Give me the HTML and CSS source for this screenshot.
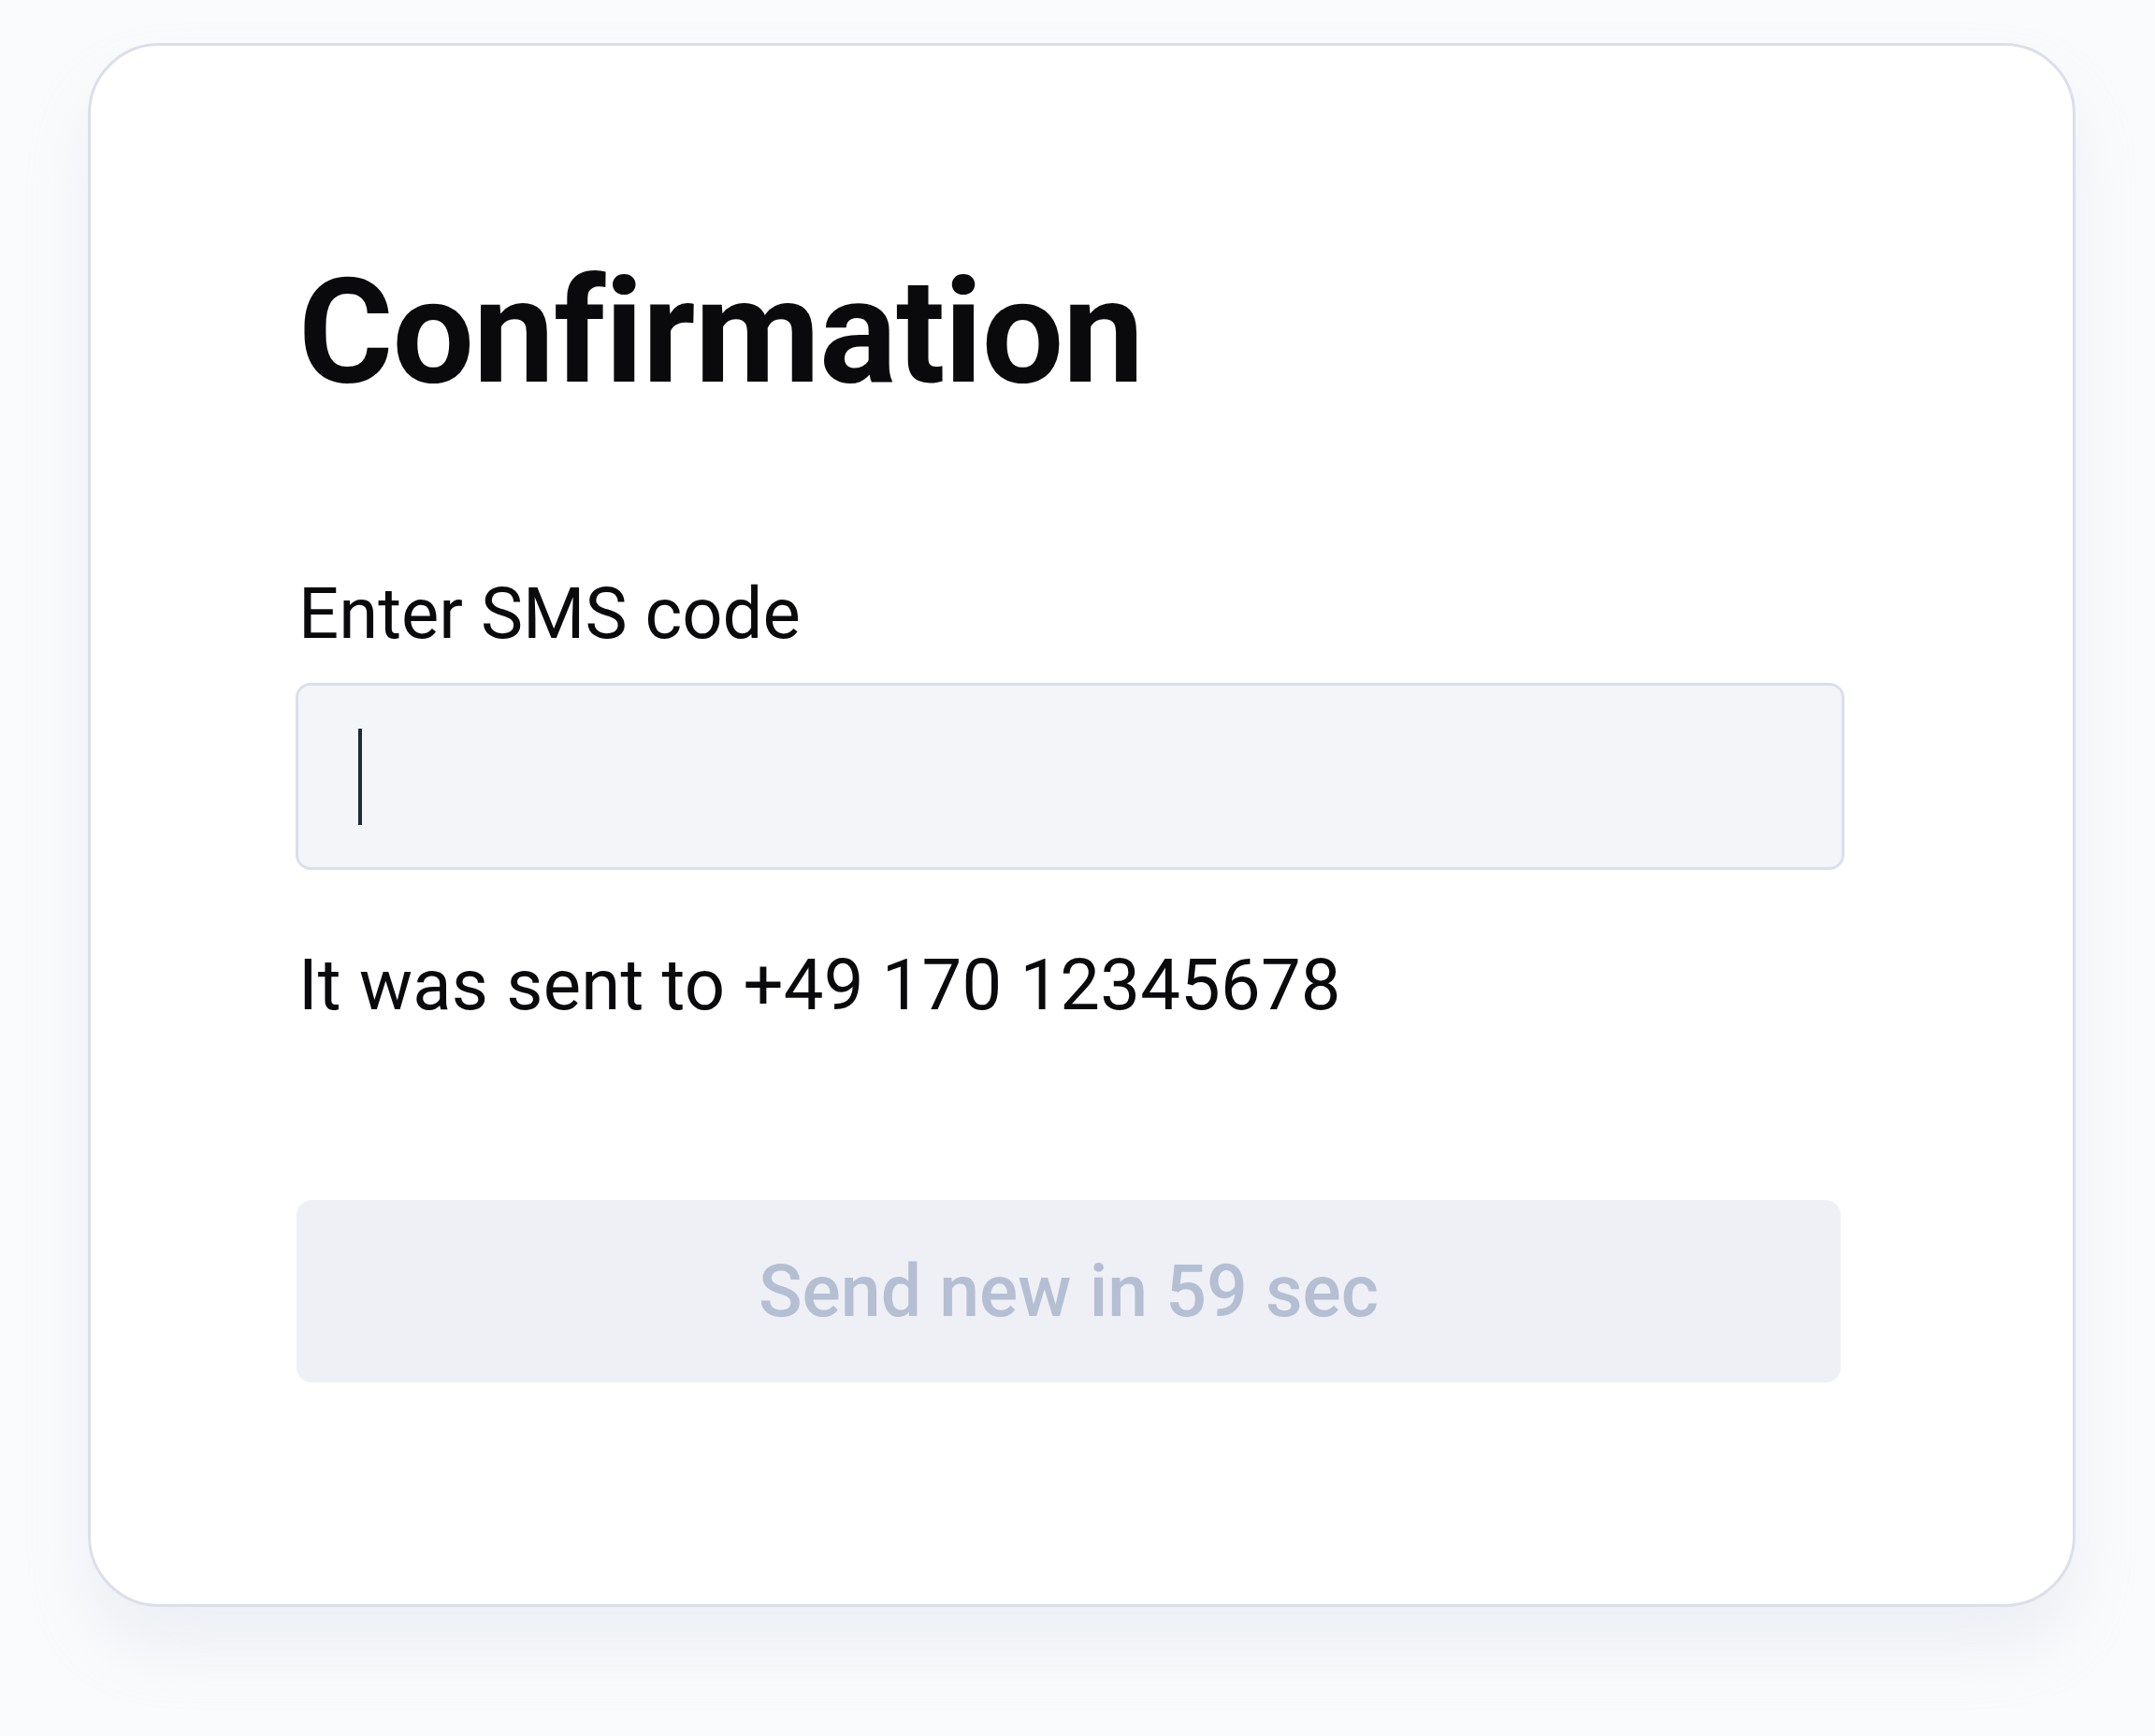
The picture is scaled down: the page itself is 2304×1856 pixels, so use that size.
FILE: index.html
```html
<!DOCTYPE html>
<html lang="en">
<head>
<meta charset="utf-8">
<title>Confirmation</title>
<link rel="stylesheet" href="styles.css">
</head>
<body>
<main class="card">
  <h1 class="title">Confirmation</h1>
  <label class="label" for="code">Enter SMS code</label>
  <div class="field" id="code" role="textbox" aria-label="Enter SMS code"><span class="caret"></span></div>
  <p class="hint">It was sent to +49 170 12345678</p>
  <button class="resend" type="button" disabled>Send new in 59 sec</button>
</main>
</body>
</html>
```

FILE: styles.css
```css
html, body {
  margin: 0;
  padding: 0;
}
body {
  width: 2304px;
  height: 1856px;
  background: #fafbfc;
  font-family: Roboto, "Liberation Sans", sans-serif;
  overflow: hidden;
}
.card {
  box-sizing: border-box;
  width: 2125px;
  height: 1672px;
  margin: 46px 0 0 94px;
  padding: 213px 249px 0 222px;
  background: #ffffff;
  border: 3px solid #dcdfea;
  border-radius: 76px;
  box-shadow: 0 44px 70px rgba(205, 211, 230, 0.3);
  display: flex;
  flex-direction: column;
  align-items: flex-start;
}
.title {
  margin: 0;
  font-size: 155px;
  line-height: 186px;
  font-weight: 700;
  color: #0a0a0c;
  letter-spacing: -0.9px;
}
.label {
  display: block;
  margin-top: 163px;
  font-size: 76px;
  line-height: 91px;
  font-weight: 400;
  color: #0a0a0c;
}
.field {
  box-sizing: border-box;
  margin: 28px 0 0 -3px;
  width: 1656px;
  height: 200px;
  background: #f4f5f9;
  border: 3px solid #dcdfea;
  border-radius: 16px;
  padding-left: 64px;
  display: flex;
  align-items: center;
}
.caret {
  display: block;
  width: 4px;
  height: 103px;
  background: #1e2a34;
}
.hint {
  margin: 78px 0 0;
  font-size: 76px;
  line-height: 91px;
  font-weight: 400;
  color: #0a0a0c;
  letter-spacing: 0.2px;
}
.resend {
  margin: 184px 0 0 -2px;
  height: 195px;
  width: 1651px;
  border: 0;
  border-radius: 16px;
  background: #eef0f5;
  color: #b5bfd3;
  font-family: Roboto, "Liberation Sans", sans-serif;
  font-size: 77px;
  font-weight: 500;
  padding: 0;
}
```
